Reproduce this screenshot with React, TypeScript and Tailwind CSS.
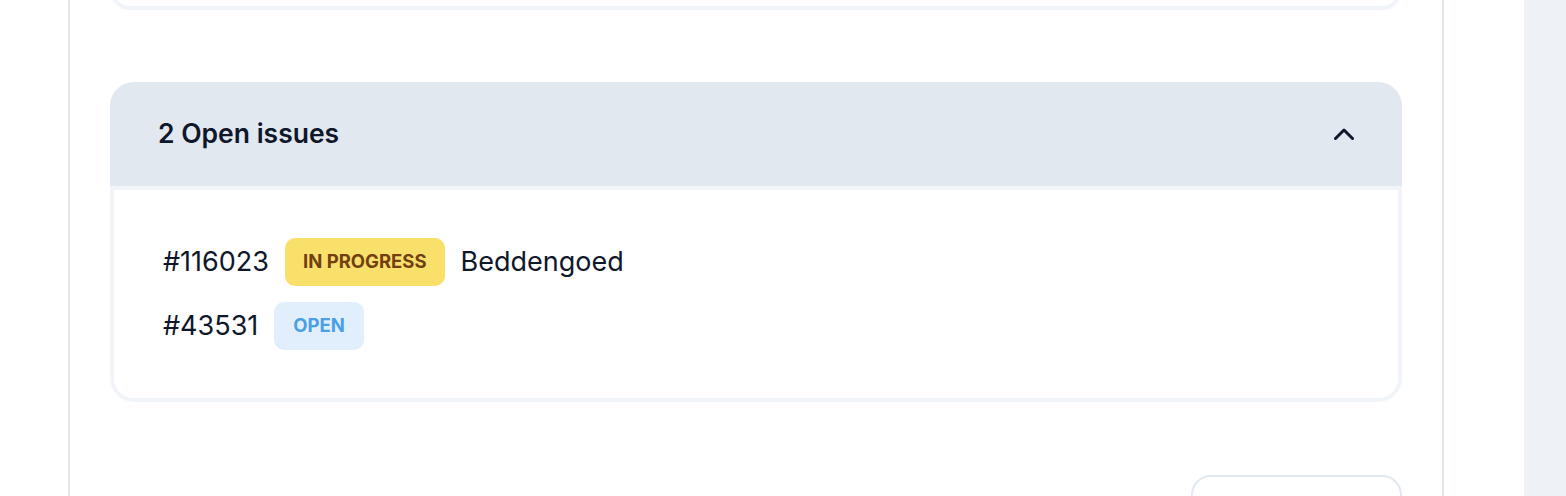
import React from "react";

export default function App() {
  return (
    <div
      className="flex h-[496px] w-[1566px] overflow-hidden bg-white"
      style={{ fontFamily: "Inter, 'Noto Sans', sans-serif" }}
    >
      <div className="w-[68px] shrink-0 bg-white" />
      <main className="w-[1376px] shrink-0 border-x-2 border-[#e2e8f0] bg-white px-10">
        <div className="-mt-[30px] h-[40px] rounded-3xl border-4 border-[#f1f5f9]" />

        <section className="mt-[72px]">
          <button className="flex h-[104px] w-full items-center justify-between rounded-t-3xl bg-[#e2e8f0] pl-12 pr-12">
            <span className="text-[26.5px] font-semibold text-[#0f172a]">
              2 Open issues
            </span>
            <svg width="20" height="12" viewBox="0 0 20 12" fill="none">
              <path
                d="M1.5 10.5 L10 2 L18.5 10.5"
                stroke="#0f172a"
                strokeWidth="3"
                strokeLinecap="round"
                strokeLinejoin="round"
              />
            </svg>
          </button>
          <div className="flex flex-col gap-4 rounded-b-3xl border-4 border-[#f1f5f9] px-12 py-12">
            <div className="flex items-center gap-4 pl-[1px]">
              <span className="text-[27px] text-[#0f172a]">#116023</span>
              <span className="flex h-12 items-center rounded-[10px] bg-[#f9e06a] px-[18px] text-[18.5px] font-bold text-[#713f12]">
                IN PROGRESS
              </span>
              <span className="text-[27px] text-[#0f172a]">Beddengoed</span>
            </div>
            <div className="flex items-center gap-4 pl-[1px]">
              <span className="text-[27px] text-[#0f172a]">#43531</span>
              <span className="flex h-12 items-center rounded-[10px] bg-[#e0effb] px-[19px] text-[18.5px] font-bold text-[#4a9fe6]">
                OPEN
              </span>
            </div>
          </div>
        </section>

        <div className="mt-[73px] flex justify-end">
          <div className="h-[60px] w-[211px] rounded-[20px] border-2 border-[#e2e8f0] bg-white" />
        </div>
      </main>
      <div className="w-[80px] shrink-0 bg-white" />
      <div className="flex-1 bg-[#eef2f7]" />
    </div>
  );
}
